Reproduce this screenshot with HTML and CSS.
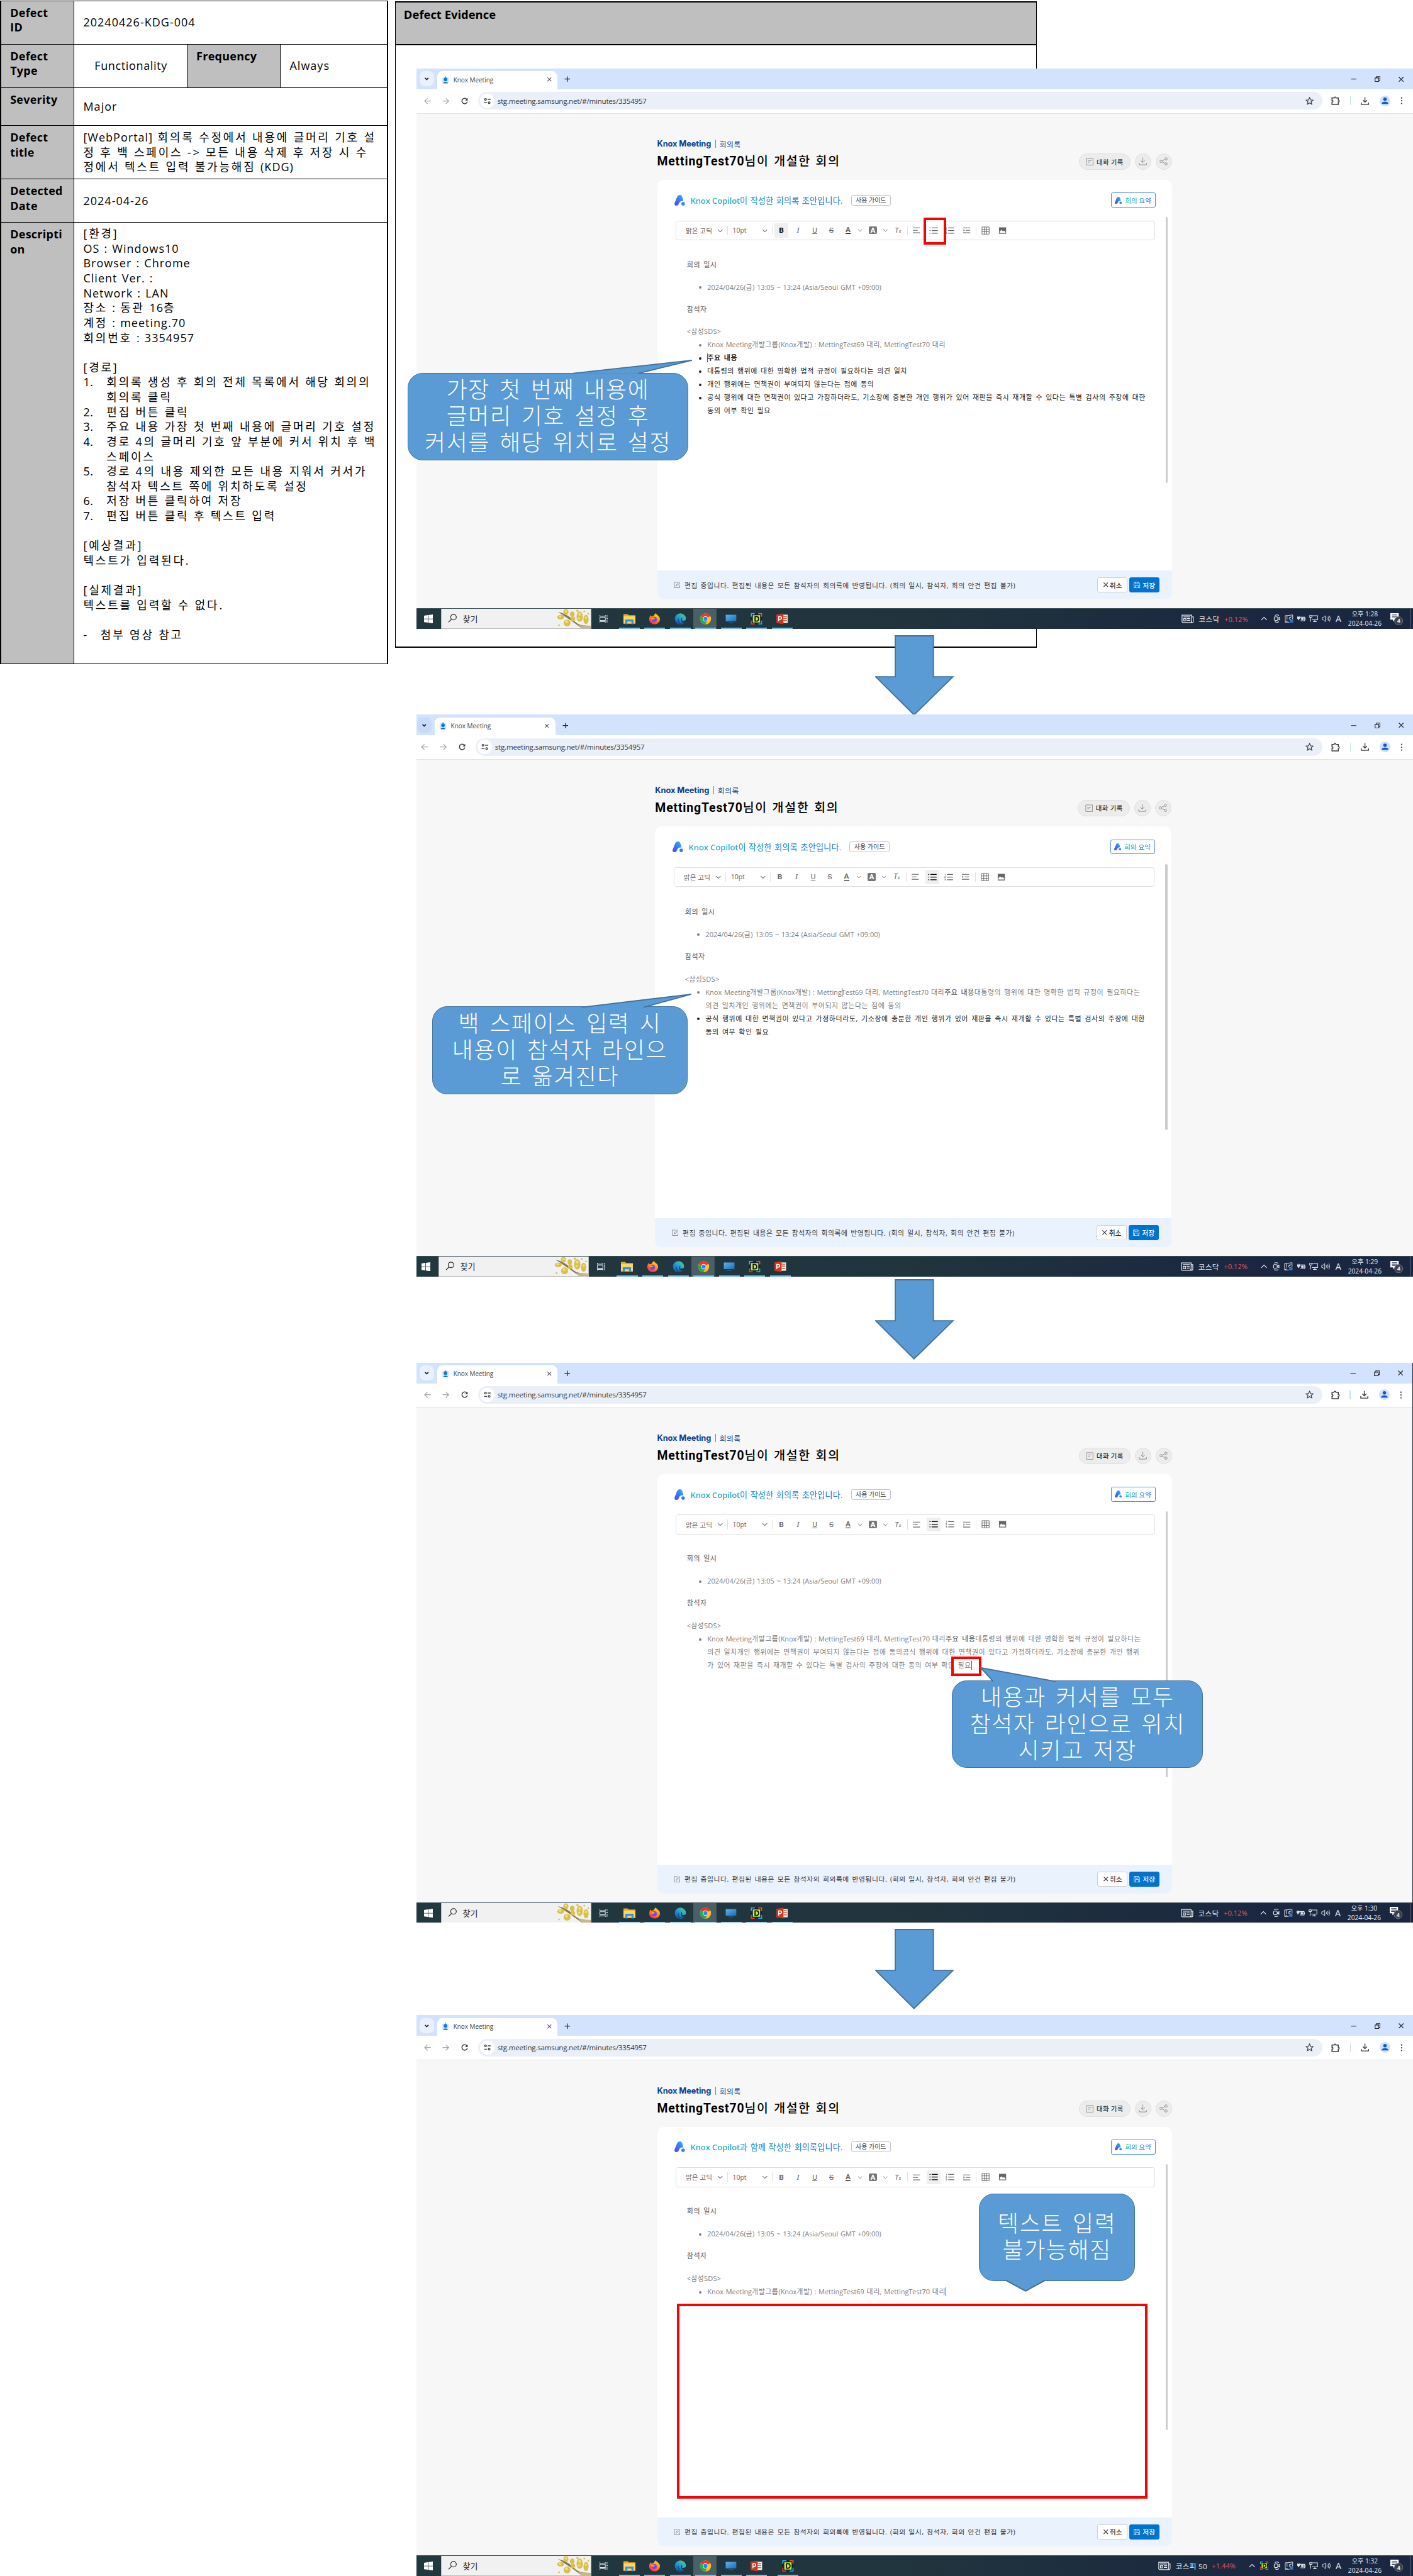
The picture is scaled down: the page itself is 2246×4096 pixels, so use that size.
FILE: index.html
```html
<!DOCTYPE html>
<html lang="ko">
<head>
<meta charset="utf-8">
<title>Defect 20240426-KDG-004</title>
<link rel="stylesheet" href="styles.css">
</head>
<body>
<svg class="sprite" aria-hidden="true">
  <defs>
    <linearGradient id="gA" x1="0" y1="1" x2="1" y2="0"><stop offset="0" stop-color="#5b3df5"/><stop offset=".5" stop-color="#3a78fb"/><stop offset="1" stop-color="#22c3f0"/></linearGradient>
    <linearGradient id="gFox" x1=".8" y1="0" x2=".2" y2="1"><stop offset="0" stop-color="#ffe04a"/><stop offset=".45" stop-color="#ff8a1e"/><stop offset="1" stop-color="#f5216b"/></linearGradient>
    <linearGradient id="gEdge" x1="0" y1="1" x2="1" y2="0"><stop offset="0" stop-color="#0c59a4"/><stop offset=".5" stop-color="#1e9de0"/><stop offset="1" stop-color="#5fd860"/></linearGradient>
    <linearGradient id="gMon" x1="0" y1="0" x2="1" y2="1"><stop offset="0" stop-color="#5cb2ee"/><stop offset="1" stop-color="#1c6cb8"/></linearGradient>
  </defs>
  <symbol id="chev" viewBox="0 0 10 10"><path d="M1.2 3.2 5 7l3.800-3.800" fill="none" stroke="currentColor" stroke-width="1.100"/></symbol>
  <symbol id="chevbold" viewBox="0 0 10 10"><path d="M1.800 3.400 5 6.600l3.200-3.200" fill="none" stroke="currentColor" stroke-width="1.900"/></symbol>
  <symbol id="fav" viewBox="0 0 14 14"><rect x="1" y="2" width="12" height="11" rx="2" fill="#d3e8fb"/><circle cx="7" cy="6" r="3.300" fill="#0a7be6"/><path d="M2.800 13c.5-3 8-3 8.400 0z" fill="#0a5fd0"/><path d="M7 0v3" stroke="#0a7be6"/></symbol>
  <symbol id="x" viewBox="0 0 10 10"><path d="m1.500 1.500 7 7m0-7-7 7" fill="none" stroke="currentColor" stroke-width="1.200"/></symbol>
  <symbol id="plus" viewBox="0 0 10 10"><path d="M5 .5v9M.5 5h9" fill="none" stroke="currentColor" stroke-width="1.300"/></symbol>
  <symbol id="back" viewBox="0 0 12 12"><path d="M11.500 6H1.200M6 1.200 1.200 6 6 10.800" fill="none" stroke="currentColor" stroke-width="1.300"/></symbol>
  <symbol id="fwd" viewBox="0 0 12 12"><path d="M.5 6h10.300M6 1.200 10.800 6 6 10.800" fill="none" stroke="currentColor" stroke-width="1.300"/></symbol>
  <symbol id="reload" viewBox="0 0 12 12"><path d="M10.400 7A4.600 4.600 0 1 1 9.600 3.100" fill="none" stroke="currentColor" stroke-width="1.600"/><path d="M11 .8v4.400H6.600z" fill="currentColor"/></symbol>
  <symbol id="tune" viewBox="0 0 12 12"><g fill="none" stroke="currentColor" stroke-width="1.400"><circle cx="2.900" cy="3.200" r="1.500"/><path d="M6.500 3.200h5M.5 8.800h5"/><circle cx="9.100" cy="8.800" r="1.500"/></g></symbol>
  <symbol id="star" viewBox="0 0 14 14"><path d="m7 1.200 1.700 3.900 4.200.4-3.200 2.800 1 4.200L7 10.300l-3.700 2.200 1-4.200L1.100 5.500l4.200-.4z" fill="none" stroke="currentColor" stroke-width="1.300"/></symbol>
  <symbol id="puzzle" viewBox="0 0 14 14"><path d="M1.200 2.800h3.300a1.500 1.500 0 0 1 3 0h3.600v3.300a1.500 1.500 0 0 1 0 3v3.700H1.200V9.500a1.600 1.600 0 0 0 0-3.200z" fill="none" stroke="currentColor" stroke-width="1.500"/></symbol>
  <symbol id="dl" viewBox="0 0 14 14"><path d="M7 .5v8.300M3.500 5.600 7 9l3.500-3.400M1 9.500v3.300h12V9.500" fill="none" stroke="currentColor" stroke-width="var(--sw,1.500)"/></symbol>
  <symbol id="user" viewBox="0 0 18 18"><circle cx="9" cy="9" r="9" fill="#cfe1fd"/><circle cx="9" cy="6.200" r="2.900" fill="#0b57d0"/><path d="M3.400 13.900c0-4.800 11.200-4.800 11.200 0z" fill="#0b57d0"/></symbol>
  <symbol id="dots" viewBox="0 0 4 14"><g fill="currentColor"><circle cx="2" cy="2" r="1.300"/><circle cx="2" cy="7" r="1.300"/><circle cx="2" cy="12" r="1.300"/></g></symbol>
  <symbol id="min" viewBox="0 0 10 10"><path d="M.5 5h9" stroke="currentColor" stroke-width="1.200"/></symbol>
  <symbol id="restore" viewBox="0 0 10 10"><path d="M.8 3h6.200v6.200H.8zM3 3V.8h6.200V7H7" fill="none" stroke="currentColor" stroke-width="1.200"/></symbol>
  <symbol id="doc" viewBox="0 0 14 14"><path d="M1 1h12v12H1zM3.800 5.200h6.400M3.800 8h3.700" fill="none" stroke="currentColor"/></symbol>
  <symbol id="share" viewBox="0 0 14 14"><g fill="none" stroke="currentColor"><circle cx="2.700" cy="7" r="2"/><circle cx="11" cy="2.800" r="2"/><circle cx="11" cy="11.200" r="2"/><path d="m4.500 6.100 4.700-2.400M4.500 7.900l4.700 2.400"/></g></symbol>
  <symbol id="copilot" viewBox="0 0 20 20"><path d="M10.200 0c2.600 0 4 1.600 4.800 4.600l1.800 6.600c-5-.4-7 1.600-8.200 4.600-1 2.800-2.600 4.200-5.200 4.200C.6 20-.4 17.800.4 15L4.800 4.200C6 1.400 7.600 0 10.200 0z" fill="url(#gA)"/><circle cx="16.300" cy="16.600" r="3.300" fill="#2a84e6"/></symbol>
  <symbol id="al" viewBox="0 0 14 12"><path d="M0 1.500h13M0 6h9M0 10.500h13" stroke="currentColor" stroke-width="1.300"/></symbol>
  <symbol id="ul" viewBox="0 0 14 12"><path d="M3.600 1.500H14M3.600 6H14M3.600 10.500H14M0 1.500h1.700M0 6h1.700M0 10.500h1.700" stroke="currentColor" stroke-width="1.400"/></symbol>
  <symbol id="ol" viewBox="0 0 14 12"><path d="M4 1.500h10M4 6h10M4 10.500h10" stroke="currentColor" stroke-width="1.300"/><path d="M.2 1h1v2.500M0 4.800h1.500L0 7.200h1.700M0 8.800h1.500v3H0m0-1.500h1.500" fill="none" stroke="currentColor" stroke-width=".7"/></symbol>
  <symbol id="ind" viewBox="0 0 14 12"><path d="M.5 1.500h13M5.500 6h8M.5 10.500h13" stroke="currentColor" stroke-width="1.300"/><path d="m1 4 2.600 2L1 8z" fill="currentColor"/></symbol>
  <symbol id="table" viewBox="0 0 14 14"><path d="M1 1h12v12H1zM1 5h12M1 9h12M5 1v12M9 1v12" fill="none" stroke="currentColor"/></symbol>
  <symbol id="img" viewBox="0 0 14 12"><path d="M1 .5h12v11H1z" fill="currentColor"/><path d="M2 10V8l3-3.300 2.500 2.500L9.600 6 12 8.500V10z" fill="#fff"/></symbol>
  <symbol id="edit" viewBox="0 0 12 12"><path d="M7 1H1v10h10V5.500M4 8l.5-2L9.800.8l1.500 1.400L6 7.500z" fill="none" stroke="currentColor" stroke-width=".9"/></symbol>
  <symbol id="save" viewBox="0 0 12 12"><path d="M.8.8h8.400l2 2v8.400H.8zM3.200.8v3h5v-3M2.800 11.200V6.500h6.400v4.700" fill="none" stroke="currentColor" stroke-width=".9"/></symbol>
  <symbol id="win" viewBox="0 0 14 14"><path d="M0 2l6-.9v5.500H0zM6.800 1 14 0v6.600H6.800zM0 7.400h6v5.500L0 12zM6.800 7.400H14V14l-7.200-1z" fill="#fff"/></symbol>
  <symbol id="mag" viewBox="0 0 16 16"><circle cx="10" cy="6" r="5" fill="none" stroke="currentColor" stroke-width="1.300"/><path d="m6.400 9.600-5.400 5.400" stroke="currentColor" stroke-width="1.300"/></symbol>
  <symbol id="plant" viewBox="0 0 60 33"><path d="M3 5c12 2 22 9 31 18 6 5 14 6 26 6v4H44C32 24 16 13 3 5z" fill="#8b7748"/><path d="M38 27c6 2 14 1 22 2v4H44z" fill="#c6b98c"/><g fill="#d9c04c"><ellipse cx="8" cy="14" rx="6" ry="4"/><ellipse cx="17" cy="5" rx="4.500" ry="5"/><ellipse cx="28" cy="9" rx="4" ry="5"/><ellipse cx="19" cy="24" rx="6" ry="6"/><ellipse cx="29" cy="17" rx="4" ry="4"/><ellipse cx="41" cy="13" rx="5.500" ry="9"/><ellipse cx="52" cy="18" rx="4.500" ry="8"/><circle cx="37" cy="3" r="2"/><circle cx="49" cy="4" r="1.500"/><circle cx="5" cy="28" r="1.500"/><circle cx="56" cy="8" r="1.500"/></g><g fill="#f0df82"><circle cx="7" cy="13" r="2"/><circle cx="17" cy="4" r="2"/><circle cx="18" cy="22" r="2.500"/><circle cx="41" cy="9" r="2.500"/><circle cx="40" cy="16" r="2"/><circle cx="52" cy="15" r="2"/></g></symbol>
  <symbol id="tv" viewBox="0 0 16 14"><g fill="none" stroke="#dfe6e8" stroke-width="1.200"><path d="M.6 0v2.200h9.800V0M.6 14v-2.200h9.800V14M.6 4.200h9.800v5.600H.6zM13.500 0v3M13.500 8v6"/></g><path d="M12.500 4.500h2v2.300h-2z" fill="#dfe6e8"/></symbol>
  <symbol id="folder" viewBox="0 0 20 18"><path d="M0 1h7l2 2h11v14H0z" fill="#e9a820"/><path d="M0 4.500h20V17H0z" fill="#fcd562"/><path d="M3 10h14v8h-3.500v-4.500h-7V18H3z" fill="#3f8fd4"/></symbol>
  <symbol id="fox" viewBox="0 0 20 20"><path d="M10 19.500C4.500 19.500.5 15.500.5 10.500c0-3 1-5.200 2.500-7l1.600 2.300L8 5c1-2 2.500-3.500 4.500-5 .5 2.300 2.500 3.200 4.300 4.700 1.800 1.600 2.700 3.500 2.700 5.800 0 5-4 9-9.500 9z" fill="url(#gFox)"/><circle cx="9.600" cy="11" r="4.300" fill="#7a3ff0"/><path d="M4 8.500c3-1.500 5 .3 7 .5-1 2.500-3 2-4 2.500C5.500 11.500 4.500 10 4 8.500z" fill="#ff9a1f"/></symbol>
  <symbol id="edge" viewBox="0 0 20 20"><circle cx="10" cy="10" r="9.800" fill="url(#gEdge)"/><path d="M8 9c-1.800 3.500.5 7.500 4.500 7.800 2.300.2 4.500-.6 6-1.800-2 3.500-5.500 5-9 4.800C4 19.500 3.500 11 8 9z" fill="#1154a0"/><path d="M12.500 8.200c1.300 1.600.6 3.300-.3 4.300 1.300 1.300 4.500 1.200 7.800-.9V17h-3c-5 0-8-3-4.500-8.800z" fill="#22383f"/></symbol>
  <symbol id="chrome" viewBox="0 0 20 20"><circle cx="10" cy="10" r="9.800" fill="#fbc116"/><path d="M10 10 1.500 5.200a9.800 9.800 0 0 1 17-.1z" fill="#e33b2e"/><path d="M10 10 1.500 5.200A9.800 9.800 0 0 0 9.600 19.800L14 12z" fill="#2da94f"/><path d="M10 5.200h8.500l-1.500-2H8z" fill="#e33b2e"/><circle cx="10" cy="10" r="4.600" fill="#fff"/><circle cx="10" cy="10" r="3.600" fill="#3b7ded"/></symbol>
  <symbol id="mon" viewBox="0 0 20 16"><path d="M.5.5h19v12H.5z" fill="url(#gMon)"/><path d="M6 14h8v1.300H6z" fill="#2c6ea6"/></symbol>
  <symbol id="dd" viewBox="0 0 20 20"><path d="M0 0h20v20H0z" fill="#14242a"/><path d="M0 6V0h7v1.800H2V6z" fill="#38b6e8"/><path d="M13 0h7v6h-2V1.800h-5z" fill="#f05a1e"/><path d="M0 13h2v5h5v2H0z" fill="#e83b1a"/><path d="M20 13v7h-7v-2h5v-5z" fill="#1da0e8"/><path d="M3.600 3.600h12.800v12.800H3.600z" fill="#c3ec3a"/><path d="M7.500 6h2.500c5 0 5 8 0 8H7.500z" fill="none" stroke="#111" stroke-width="2"/></symbol>
  <symbol id="ppt" viewBox="0 0 20 18"><path d="M10 2h9.500v14H10z" fill="#f6efec"/><path d="M12 5h6M12 8h6M12 12h6" stroke="#c9412a" stroke-width="1.300"/><path d="M0 1.800 12 0v18L0 16.200z" fill="#c8391f"/><path d="M4 13V5.300h2.300c3.300 0 3.300 4.500 0 4.500H4" fill="none" stroke="#fff" stroke-width="1.600"/></symbol>
  <symbol id="news" viewBox="0 0 22 15"><path d="M1 1h17v13H3a2 2 0 0 1-2-2zM18 4h3v8a2 2 0 0 1-4 0M3.500 4h12M10 7h5.500M10 10h5.500" fill="none" stroke="#e6ecf2" stroke-width="1.400"/><path d="M4 7h4v4H4z" fill="none" stroke="#e6ecf2" stroke-width="1.400"/></symbol>
  <symbol id="up" viewBox="0 0 12 8"><path d="m1 6.500 5-5 5 5" fill="none" stroke="#e6ecf2" stroke-width="1.300"/></symbol>
  <symbol id="cam" viewBox="0 0 12 14"><g fill="none" stroke="#e6ecf2" stroke-width="1.200"><rect x="1.500" y="4" width="6" height="6" rx="1.500"/><path d="M7.500 6.500 10.500 5v4L7.500 7.500M2.500 1.700q3.500-1.800 7 0M2.500 12.300q3.500 1.800 7 0"/></g></symbol>
  <symbol id="ink" viewBox="0 0 15 14"><path d="M13.500 8V.8L4 2H1v11h7M1 13l4-2M4 2v7" fill="none" stroke="#e6ecf2"/><path d="M10.500 5.500q-3-1-3 2 1 1.500 3 .5M8 5l4-1" fill="none" stroke="#e6ecf2"/><circle cx="11.500" cy="11" r="3" fill="#2c73c4"/></symbol>
  <symbol id="bat" viewBox="0 0 14 10"><path d="M4.500 2.500h8v6h-7M12.500 4.500h1.200v2h-1.200" fill="none" stroke="#e6ecf2" stroke-width="1.200"/><path d="M7 4h3.500v3H7zM0 2h4.500v3H3v2H1.500V5H0zM.8.500v2M3.600.5v2" fill="#e6ecf2" stroke="#e6ecf2" stroke-width=".6"/></symbol>
  <symbol id="net" viewBox="0 0 15 12"><path d="M5 1h9v7H4.500M9.500 8v3M6.500 11h6M.8.800h3.700v3H.8zM2.600 3.800V11" fill="none" stroke="#e6ecf2" stroke-width="1.100"/></symbol>
  <symbol id="vol" viewBox="0 0 15 12"><path d="M1 4h2l3-3v10L3 8H1zM8.500 4q1.200 2 0 4M10.700 2.500q2 3.500 0 7M12.900 1q3 5 0 10" fill="none" stroke="#e6ecf2"/></symbol>
  <symbol id="noti" viewBox="0 0 22 22"><path d="M0 1h14v11H8l-3.500 3v-3H0z" fill="#fff"/><path d="M2.500 4h9M2.500 6.500h9M2.500 9h7" stroke="#1b2740"/><circle cx="14" cy="14" r="7" fill="#3a3f48" stroke="#72777f"/></symbol>
</svg>

<main class="report">
  <section class="summary">
    <div class="row r1"><div class="label en">Defect<br>ID</div><div class="val en">20240426-KDG-004</div></div>
    <div class="row r2"><div class="label en">Defect<br>Type</div><div class="val type en">Functionality</div><div class="label freq en">Frequency</div><div class="val always en">Always</div></div>
    <div class="row r3"><div class="label en">Severity</div><div class="val en">Major</div></div>
    <div class="row r4"><div class="label en">Defect<br>title</div><div class="val"><p><span class="en">[WebPortal]</span> 회의록 수정에서 내용에 글머리 기호 설<br>정 후 백 스페이스 -&gt; 모든 내용 삭제 후 저장 시 수<br>정에서 텍스트 입력 불가능해짐 <span class="en">(KDG)</span></p></div></div>
    <div class="row r5"><div class="label en">Detected<br>Date</div><div class="val en">2024-04-26</div></div>
    <div class="row r6"><div class="label en">Descripti<br>on</div>
      <div class="val desc">
        <p>[환경]</p>
        <p class="en">OS : Windows10</p>
        <p class="en">Browser : Chrome</p>
        <p class="en">Client Ver. :</p>
        <p class="en">Network : LAN</p>
        <p>장소<span class="en"> : </span>동관 <span class="en">16</span>층</p>
        <p>계정<span class="en"> : meeting.70</span></p>
        <p>회의번호<span class="en"> : 3354957</span></p>
        <p class="gap">[경로]</p>
        <ol>
          <li><i>1.</i><span>회의록 생성 후 회의 전체 목록에서 해당 회의의<br>회의록 클릭</span></li>
          <li><i>2.</i><span>편집 버튼 클릭</span></li>
          <li><i>3.</i><span>주요 내용 가장 첫 번째 내용에 글머리 기호 설정</span></li>
          <li><i>4.</i><span>경로 4의 글머리 기호 앞 부분에 커서 위치 후 백<br>스페이스</span></li>
          <li><i>5.</i><span>경로 4의 내용 제외한 모든 내용 지워서 커서가<br>참석자 텍스트 쪽에 위치하도록 설정</span></li>
          <li><i>6.</i><span>저장 버튼 클릭하여 저장</span></li>
          <li><i>7.</i><span>편집 버튼 클릭 후 텍스트 입력</span></li>
        </ol>
        <p class="gap">[예상결과]</p>
        <p>텍스트가 입력된다.</p>
        <p class="gap">[실제결과]</p>
        <p>텍스트를 입력할 수 없다.</p>
        <ol class="gap"><li class="dash"><i>-</i><span>첨부 영상 참고</span></li></ol>
      </div>
    </div>
  </section>

  <section class="evidence">
    <div class="frame"><h2>Defect Evidence</h2></div>

    <article class="shot" data-shot="0">
      <div class="mark mark1"></div>
      <div class="callout c1"><svg class="tail" width="210" height="26" viewBox="0 0 210 26"><path d="M4 24 204 2 114 24" /></svg><p>가장 첫 번째 내용에<br>글머리 기호 설정 후<br>커서를 해당 위치로 설정</p></div>
    </article>
    <svg class="arrow a1" width="133" height="135" viewBox="0 0 133 135"><path d="M34 1h64v69h33l-65.500 64L1 70h33z"/></svg>
    <article class="shot shot-b" data-shot="1">
      <div class="callout c2"><svg class="tail" width="210" height="26" viewBox="0 0 210 26"><path d="M4 24 188 2 108 24" /></svg><p>백 스페이스 입력 시<br>내용이 참석자 라인으<br>로 옮겨진다</p></div>
    </article>
    <svg class="arrow a2" width="133" height="135" viewBox="0 0 133 135"><path d="M34 1h64v69h33l-65.500 64L1 70h33z"/></svg>
    <article class="shot shot-c" data-shot="2">
      <div class="mark mark3"></div>
      <div class="callout c3"><svg class="tail" width="140" height="28" viewBox="0 0 140 28"><path d="M23 26 2 3l126 23" /></svg><p>내용과 커서를 모두<br>참석자 라인으로 위치<br>시키고 저장</p></div>
    </article>
    <svg class="arrow a3" width="133" height="135" viewBox="0 0 133 135"><path d="M34 1h64v69h33l-65.500 64L1 70h33z"/></svg>
    <article class="shot" data-shot="3">
      <div class="mark mark4"></div>
      <div class="callout c4"><svg class="tail" width="70" height="22" viewBox="0 0 70 22"><path d="M2 2l33 18L68 2" /></svg><p>텍스트 입력<br>불가능해짐</p></div>
    </article>
  </section>
</main>
<script src="shots.js"></script>
</body>
</html>
```
FILE: shots.js
```js
const icon = (id, w, h = w, cls = '') =>
  `<svg class="${cls}" width="${w}" height="${h}"><use href="#${id}"/></svg>`;

const caret = '<span class="caret"></span>';
const team = 'Knox Meeting<b class="k">개발그룹</b>(Knox<b class="k">개발</b>) : ';
const major = '<strong>주요 내용</strong>';

const shots = [
  {
    head: 'Knox Copilot<span>이 작성한 회의록 초안입니다.</span>', bold: true, time: '1:28',
    apps: ['dd', 'ppt'], stock: '코스닥', rate: '+0.12%',
    lines: [
      ['lat', team + 'MettingTest69 <b class="k">대리</b>, MettingTest70 <b class="k">대리</b>'],
      ['dark', caret + major],
      ['dark', '대통령의 행위에 대한 명확한 법적 규정이 필요하다는 의견 일치'],
      ['dark', '개인 행위에는 면책권이 부여되지 않는다는 점에 동의'],
      ['dark', '공식 행위에 대한 면책권이 있다고 가정하더라도, 기소장에 충분한 개인 행위가 있어 재판을 즉시 재개할 수 있다는 특별 검사의 주장에 대한<br>동의 여부 확인 필요'],
    ],
  },
  {
    head: 'Knox Copilot<span>이 작성한 회의록 초안입니다.</span>', list: true, time: '1:29',
    apps: ['dd', 'ppt'], stock: '코스닥', rate: '+0.12%',
    lines: [
      ['lat', team + `Metting${caret}Test69 <b class="k">대리</b>, MettingTest70 <b class="k">대리${major}대통령의 행위에 대한 명확한 법적 규정이 필요하다는<br>의견 일치개인 행위에는 면책권이 부여되지 않는다는 점에 동의</b>`],
      ['dark', '공식 행위에 대한 면책권이 있다고 가정하더라도, 기소장에 충분한 개인 행위가 있어 재판을 즉시 재개할 수 있다는 특별 검사의 주장에 대한<br>동의 여부 확인 필요'],
    ],
  },
  {
    head: 'Knox Copilot<span>이 작성한 회의록 초안입니다.</span>', list: true, time: '1:30',
    apps: ['dd', 'ppt'], stock: '코스닥', rate: '+0.12%',
    lines: [
      ['lat', team + `MettingTest69 <b class="k">대리</b>, MettingTest70 <b class="k">대리${major}대통령의 행위에 대한 명확한 법적 규정이 필요하다는<br>의견 일치개인 행위에는 면책권이 부여되지 않는다는 점에 동의공식 행위에 대한 면책권이 있다고 가정하더라도, 기소장에 충분한 개인 행위<br>가 있어 재판을 즉시 재개할 수 있다는 특별 검사의 주장에 대한 동의 여부 확인 필요</b>${caret}`],
    ],
  },
  {
    head: 'Knox Copilot<span>과 함께 작성한 회의록입니다.</span>', list: true, time: '1:32',
    apps: ['ppt', 'dd'], stock: '코스피 50', rate: '+1.44%', trayApp: true,
    lines: [
      ['lat', team + `MettingTest69 <b class="k">대리</b>, MettingTest70 <b class="k">대리</b>${caret}`],
    ],
  },
];

const tool = (html, on) => `<span class="tool${on ? ' on' : ''}">${html}</span>`;

const desktop = (s) => `
<div class="desktop">
  <div class="tabs">
    <span class="tabmenu">${icon('chevbold', 9)}</span>
    <span class="tab">${icon('fav', 13)}<em>Knox Meeting</em>${icon('x', 9)}</span>
    ${icon('plus', 10, 10, 'newtab')}
    <span class="winbtns">${icon('min', 10)}${icon('restore', 10)}${icon('x', 11)}</span>
  </div>
  <div class="address">
    <span class="nav off">${icon('back', 12)}</span><span class="nav off">${icon('fwd', 12)}</span><span class="nav">${icon('reload', 12)}</span>
    <div class="omni"><span class="site">${icon('tune', 12)}</span><span class="url">stg.meeting.samsung.net/#/minutes/3354957</span>${icon('star', 14, 14, 'star')}</div>
    <span class="ext">${icon('puzzle', 15)}<i></i>${icon('dl', 14)}${icon('user', 18)}${icon('dots', 4, 13)}</span>
  </div>
  <div class="page">
    <div class="crumb"><b>Knox Meeting</b><i></i><span>회의록</span></div>
    <div class="titlebar"><h1>MettingTest70<span>님이 개설한 회의</span></h1>
      <span class="pill">${icon('doc', 13)}대화 기록</span><span class="round">${icon('dl', 14)}</span><span class="round">${icon('share', 14)}</span></div>
    <div class="card">
      <div class="cardhead">${icon('copilot', 18, 20)}<span class="lead">${s.head}</span><span class="guide">사용 가이드</span><span class="sum">${icon('copilot', 12, 12)}<em>회의 요약</em></span></div>
      <div class="toolbar">
        <span class="sel s1">맑은 고딕${icon('chev', 10)}</span><span class="sel s2"><em>10pt</em>${icon('chev', 10)}</span>
        ${tool('<b>B</b>', s.bold)}${tool('<i>I</i>')}${tool('<u>U</u>')}${tool('<s>S</s>')}
        ${tool('<span class="fc">A</span>')}<span class="tc">${icon('chev', 9)}</span>${tool('<span class="bc">A</span>')}<span class="tc">${icon('chev', 9)}</span>${tool('<span class="clr">T<small>x</small></span>')}
        <span class="sep"></span>${tool(icon('al', 13, 11))}${tool(icon('ul', 15, 12), s.list)}${tool(icon('ol', 15, 12))}${tool(icon('ind', 14, 11))}<span class="sep"></span>${tool(icon('table', 14))}${tool(icon('img', 14, 12))}
      </div>
      <div class="editor">
        <p class="hd">회의 일시</p>
        <ul class="date"><li class="lat">2024/04/26(<b class="k">금</b>) 13:05 ~ 13:24 (Asia/Seoul GMT +09:00)</li></ul>
        <p class="hd">참석자</p>
        <p class="org">&lt;삼성SDS&gt;</p>
        <ul>${s.lines.map(([c, t]) => `<li class="${c}">${t}</li>`).join('')}</ul>
      </div>
      <div class="foot">${icon('edit', 11)}<span>편집 중입니다. 편집된 내용은 모든 참석자의 회의록에 반영됩니다. (회의 일시, 참석자, 회의 안건 편집 불가)</span>
        <a class="btn">${icon('x', 10)}취소</a><a class="btn blue">${icon('save', 11)}저장</a></div>
      <div class="scroll"></div>
    </div>
  </div>
  <div class="taskbar">
    <span class="start">${icon('win', 15)}</span>
    <span class="search">${icon('mag', 15)}<em>찾기</em>${icon('plant', 58, 33)}</span>
    <span class="app plain">${icon('tv', 15, 13)}</span>
    ${['folder', 'fox', 'edge', 'chrome', 'mon', ...s.apps].map((a) => `<span class="app ${a}">${icon(a, a === 'mon' ? 19 : 20, a === 'mon' ? 15 : 19)}</span>`).join('')}
    <div class="tray">${icon('news', 21, 15)}<span class="stock">${s.stock}</span><span class="rate">${s.rate}</span>
      <span class="t up">${icon('up', 11, 8)}</span>${s.trayApp ? `<span class="t">${icon('dd', 14)}</span>` : ''}<span class="t">${icon('cam', 12, 14)}</span><span class="t">${icon('ink', 15, 14)}</span><span class="t">${icon('bat', 14, 10)}</span><span class="t">${icon('net', 15, 12)}</span><span class="t">${icon('vol', 15, 12)}</span><span class="t ime">A</span>
      <span class="clock">오후 ${s.time}<br>2024-04-26</span>
      <span class="noti">${icon('noti', 22)}<b>4</b></span><span class="peek"></span></div>
  </div>
</div>`;

document.querySelectorAll('.shot').forEach((el) => {
  el.insertAdjacentHTML('afterbegin', `<div class="screen">${desktop(shots[el.dataset.shot])}</div>`);
});
```
FILE: styles.css
```css
* { box-sizing: border-box; }
html, body { width: 2246px; height: 4096px; overflow: hidden; }
body {
  margin: 0;
  background: #fff;
  color: #000;
  font-family: "Open Sans", "Noto Sans CJK KR", sans-serif;
}
p, h1, h2, ol, ul { margin: 0; padding: 0; list-style: none; }
em, i { font-style: normal; }
svg { display: block; flex: none; }
.sprite { position: absolute; width: 0; height: 0; }
.report { zoom: 0.94527; display: flex; width: 2376px; height: 4333px; overflow: hidden; }

/* defect summary */
.summary {
  width: 653px; height: 1116px; flex: none; margin-top: 1px;
  border: 2px solid #000; border-left-width: 3px; border-right-width: 3px;
  font-size: 19px; line-height: 25px; letter-spacing: 3px; white-space: nowrap;
  display: flex; flex-direction: column;
}
.en { letter-spacing: 1.100px; word-spacing: 1.500px; }
.row { display: flex; border-bottom: 2px solid #000; }
.row:last-child { border-bottom: 0; }
.r1, .r2 { height: 73px; }
.r3 { height: 64px; }
.r4 { height: 90px; }
.r5 { height: 73px; }
.r6 { flex: 1; }
.label { width: 123px; padding: 7px 0 0 15px; background: #bfbfbf; border-right: 2px solid #000; font-weight: 700; letter-spacing: .3px; }
.val { flex: 1; padding-left: 15px; display: flex; align-items: center; }
.type { flex: none; width: 189px; padding: 0 0 0 1px; justify-content: center; letter-spacing: .7px; }
.freq { width: 158px; border-left: 2px solid #000; }
.desc { display: block; padding-top: 6px; }
.desc .gap { margin-top: 25px; }
.desc li { display: flex; }
.desc li i { width: 39px; letter-spacing: .5px; }
.desc .dash i { width: 29px; }

/* evidence column */
.evidence { position: relative; flex: none; width: 1723px; padding: 115px 0 0 47px; }
.frame { position: absolute; left: 11px; top: 2px; width: 1079px; height: 1088px; border: 3px solid #000; border-width: 3px 2px; }
.frame h2 { height: 72px; padding: 6px 0 0 14px; background: #bfbfbf; border-bottom: 3px solid #000; font-size: 19.5px; line-height: 28px; }
.shot { position: relative; width: 1676px; height: 943px; }
.shot-b { height: 946px; }
.shot-c { height: 942px; }
.screen { height: 100%; overflow: hidden; }
.shot-b .desktop { zoom: 1.0028; margin-left: -4.5px; }
.shot-c .desktop { border-right: 1px solid #223; }
.arrow { margin-left: 772px; fill: #5b9bd5; stroke: #41719c; stroke-width: 2; position: relative; }
.a1 { margin-top: 10px; margin-bottom: -1px; }
.a2 { margin-top: 4px; margin-bottom: 5px; }
.a3 { margin-top: 11px; margin-bottom: 10px; }

.mark { position: absolute; border: 5px solid #f00; }
.mark1 { left: 853px; top: 251px; width: 38px; height: 46px; }
.mark3 { left: 900px; top: 495px; width: 50px; height: 32px; }
.mark4 { left: 438px; top: 485px; width: 792px; height: 328px; }
.callout {
  position: absolute; display: flex; align-items: center; justify-content: center; text-align: center;
  background: #5b9bd5; border: 2px solid #41719c; border-radius: 25px; color: #fff;
  font-size: 38px; line-height: 44.700px; font-weight: 300; letter-spacing: 1.700px; word-spacing: 4.500px; white-space: nowrap;
}
.callout .tail { position: absolute; fill: #5b9bd5; stroke: #41719c; stroke-width: 2; }
.c1 { left: -14px; top: 512px; width: 471px; height: 147px; }
.c1 .tail { left: 272px; top: -24px; }
.c2 { left: 27px; top: 491px; width: 429px; height: 148px; }
.c2 .tail { left: 246px; top: -24px; }
.c3 { left: 901px; top: 535px; width: 422px; height: 147px; }
.c3 .tail { left: 45px; top: -26px; }
.c4 { left: 946px; top: 300px; width: 263px; height: 147px; }
.c4 .tail { left: 42px; bottom: -20px; }

/* browser window */
.desktop { width: 1676px; height: 943px; display: flex; flex-direction: column; background: #f7f7f7; font-size: 11.600px; white-space: nowrap; }
.tabs { display: flex; height: 35px; padding: 5px 0 0 5.500px; background: #d3e3fd; color: #222; }
.tabmenu { width: 25px; height: 25px; border-radius: 9px; background: #e9f1fe; display: grid; place-items: center; }
.shot-b .tabmenu { background: #c6dafc; }
.tab { width: 202px; height: 30px; margin-left: 5px; padding: 0 9px 2px 7px; background: #fff; border-radius: 9px 9px 0 0; display: flex; align-items: center; color: #444; }
.tab em { flex: 1; margin-left: 7px; font-size: 10.500px; }
.newtab { margin: 8px 0 0 12px; }
.winbtns { margin: 0 14px 4px auto; display: flex; align-items: center; gap: 30px; }
.address { display: flex; height: 41px; align-items: center; padding: 0 17px 1px 3px; background: #fff; border-bottom: 1px solid #e2e2e2; color: #3c4043; }
.nav { width: 31.500px; display: grid; place-items: center; }
.nav.off { color: #a5a5a5; }
.omni { display: flex; align-items: center; width: 1419px; height: 30px; margin-left: 7px; padding: 0 14px 0 3px; border-radius: 15px; background: #ebeff8; }
.site { width: 24px; height: 24px; border-radius: 50%; background: #fff; display: grid; place-items: center; }
.url { flex: 1; margin-left: 5px; font-size: 12.200px; letter-spacing: -.2px; color: #333; }
.ext { display: flex; align-items: center; flex: 1; justify-content: space-between; margin-left: 15px; }
.ext i { width: 2px; height: 15px; background: #c9defc; margin: 0 -1px; }

.page { flex: 1; width: 866px; margin-left: 405px; padding-top: 41px; }
.crumb { display: flex; align-items: center; height: 20px; color: #0b3e92; }
.crumb b { width: 91px; font-family: Inter, sans-serif; font-size: 13.600px; letter-spacing: -.1px; }
.crumb i { width: 1px; height: 14px; margin: 0 6px 0 7px; background: #6c88bb; }
.crumb span { font-size: 12.500px; letter-spacing: .5px; }
.titlebar { display: flex; align-items: center; height: 40px; gap: 7px; padding-bottom: 0; }
.titlebar h1 { flex: 1; font: 700 20.500px/40px Roboto, "Noto Sans CJK KR", sans-serif; letter-spacing: .9px; }
.titlebar h1 span { font-weight: 500; letter-spacing: 1.900px; word-spacing: 1px; }
.pill, .round { height: 28px; border: 1px solid #e0e0e0; border-radius: 14px; background: #ececec; color: #333; display: flex; align-items: center; justify-content: center; gap: 5px; }
.pill { width: 87px; font-weight: 500; font-size: 11px; letter-spacing: .4px; }
.round { width: 28px; --sw: 1; }
.pill svg, .round svg { color: #888; }
.card { position: relative; height: 706px; margin-top: 10.500px; background: #fff; border-radius: 11px; overflow: hidden; display: flex; flex-direction: column; }
.cardhead { display: flex; align-items: center; height: 68.500px; padding: 0 28px 0 29px; }
.lead { margin-left: 9px; width: 257px; font-size: 14px; font-weight: 600; letter-spacing: -.2px; background: linear-gradient(90deg, #1fb4c2, #2f9ed8 50%, #3b7ff0); -webkit-background-clip: text; background-clip: text; color: transparent; }
.lead span { font-weight: 500; font-size: 14px; letter-spacing: .05px; word-spacing: 1px; }
.guide { margin-left: 13px; width: 67px; height: 18px; border: 1px solid #c4c4c4; border-radius: 3px; text-align: center; font-size: 10.600px; line-height: 15px; color: #333; }
.sum { margin-left: auto; width: 75px; height: 25px; border: 1px solid #4a8cf3; border-radius: 3px; display: flex; align-items: center; justify-content: center; gap: 5px; }
.sum em { font-size: 11.200px; font-weight: 500; background: linear-gradient(90deg, #1fc0b8, #3b7ff0); -webkit-background-clip: text; background-clip: text; color: transparent; }
.toolbar { display: flex; align-items: center; width: 806px; height: 33px; margin-left: 31px; border: 1px solid #dedede; border-radius: 4px; color: #666; }
.sel { position: relative; display: flex; align-items: center; justify-content: space-between; height: 16px; border-right: 1px solid #e2e2e2; padding-right: 7px; color: #666; }
.s1 { width: 87px; padding-left: 16px; font-size: 11.300px; }
.s2 { width: 75px; padding-left: 8px; margin-right: 1px; font-size: 11px; }
.tool { width: 28px; height: 24px; border-radius: 3px; display: grid; place-items: center; font: 12.500px/24px Roboto, sans-serif; }
.tool.on { background: #efefef; color: #000; box-shadow: inset 2px 0 #fff, inset -2px 0 #fff; }
.tool i { font-style: italic; font-family: "Liberation Serif", serif; font-size: 14px; }
.fc { line-height: 12px; font-weight: 700; border-bottom: 2px solid #000; }
.bc { line-height: 13px; width: 13px; text-align: center; font-weight: 700; background: #777; color: #fff; border-radius: 2px; }
.clr { font-style: italic; }
.clr small { font-size: 8px; }
.tc { width: 14px; display: grid; place-items: center; }
.sep { width: 1px; height: 16px; margin: 0 1.500px; background: #e2e2e2; }

.editor { flex: 1; padding: 30.500px 0 0 50px; color: #808080; letter-spacing: .6px; word-spacing: 1.800px; line-height: 22.200px; font-size: 11.600px; }
.editor .hd { height: 38px; font-weight: 500; color: #777; }
.editor .date { height: 37px; }
.editor .org { margin-top: 0; letter-spacing: .3px; }
.editor li { position: relative; padding-left: 34.500px; }
.editor li::before { content: ""; position: absolute; left: 20px; top: 9px; width: 4.500px; height: 4.500px; border-radius: 50%; background: currentColor; }
.editor .dark { color: #222; }
.editor .lat { letter-spacing: -.03px; word-spacing: 1px; }
.k { font-weight: 400; letter-spacing: .55px; word-spacing: 1.700px; }
.k strong { color: #666; font-weight: 500; }
.caret { display: inline-block; width: 1px; height: 15px; margin-right: -1px; background: #555; vertical-align: -3px; }
.scroll { position: absolute; right: 7px; top: 63px; width: 4px; height: 447px; border-radius: 2px; background: #ccc; }
.foot { height: 49px; background: #eaf2fe; display: flex; align-items: center; padding: 0 21px 0 28px; color: #333; }
.foot > svg { color: #777; }
.foot span { flex: 1; margin-left: 7px; font-size: 11.400px; letter-spacing: .6px; word-spacing: 1.400px; }
.btn { width: 51px; height: 25px; margin-left: 3px; border: 1px solid #d0d0d0; border-radius: 3px; background: #fff; display: flex; align-items: center; justify-content: center; gap: 2px; font-size: 11.400px; font-weight: 500; }
.blue { background: #0073cf; border-color: #0073cf; color: #fff; gap: 4px; }

/* taskbar */
.taskbar { height: 35px; display: flex; background: linear-gradient(90deg, #22383f, #20343d 50%, #1b2740 85%); border-top: 1px solid #3d4f57; color: #e6ecf2; }
.start { width: 42px; display: grid; place-items: center; }
.search { width: 252px; background: #f1f1f1; border: 1px solid #bbb; border-width: 0 1px 1px; display: flex; align-items: center; color: #222; padding-left: 10px; }
.search em { flex: 1; margin-left: 10px; font-size: 13.800px; }
.app { width: 42.800px; display: grid; place-items: center; position: relative; }
.app:not(.plain)::after { content: ""; position: absolute; left: 4px; bottom: 0; width: 35px; height: 2px; background: #76b9ed; }
.app.chrome { background: linear-gradient(90deg, transparent 1px, #4b5f66 1px 39px, #384c53 39px 41px, transparent 41px); }
.app.ppt + .dd { margin-left: 10px; }
.tray { margin-left: auto; display: flex; align-items: center; }
.stock { margin-left: 8px; font-size: 12.300px; letter-spacing: .3px; }
.rate { margin-left: 8px; margin-right: 17px; font-size: 11.800px; color: #e4575f; }
.t { width: 20.800px; display: grid; place-items: center; }
.ime { font-size: 15px; line-height: 16px; }
.clock { width: 68px; text-align: center; font-size: 10.800px; line-height: 16px; }
.noti { position: relative; margin-left: 9px; width: 22px; }
.noti b { position: absolute; left: 7px; top: 7px; width: 14px; text-align: center; font-size: 9.500px; line-height: 14px; }
.peek { width: 1px; height: 34px; margin: 0 3px 0 12px; background: #5a6478; }
```
